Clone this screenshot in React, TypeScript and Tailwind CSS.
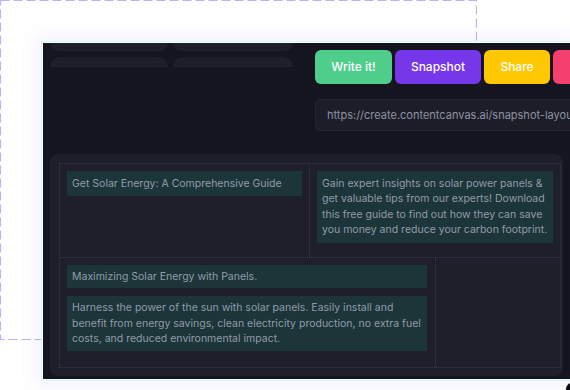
import React from 'react';

const font = { fontFamily: 'Inter, "Liberation Sans", sans-serif' };

const buttons = [
  { label: 'Write it!', cls: 'w-[77px] bg-[#4fcd8a]' },
  { label: 'Snapshot', cls: 'w-[86px] bg-[#7537e9]' },
  { label: 'Share', cls: 'w-[66px] bg-[#ffc800]' },
  { label: 'Publish', cls: 'w-[120px] bg-[#f43f6f]' },
];

const Box: React.FC<{ className?: string; children: React.ReactNode }> = ({ className = '', children }) => (
  <div className={`bg-[#1c3538] px-[5px] text-[10.5px] leading-[15.4px] text-[#929caa] ${className}`}>{children}</div>
);

const App: React.FC = () => {
  return (
    <div className="relative w-[570px] h-[390px] bg-white overflow-hidden" style={font}>
      <div className="relative w-[477px] h-[340px]">
        <svg className="w-full h-full" viewBox="0 0 477 340">
          <rect x="0.5" y="0.5" width="476" height="339" fill="none" stroke="#b8b4fc" strokeWidth="1.2" strokeDasharray="9 4" />
        </svg>

        <div className="absolute left-[43px] top-[43px] w-[527px] h-[336px] bg-[#15151f] overflow-hidden flex flex-col shadow-[0_0_0_1px_#ffffff,0_0_0_2px_#d3fbf6,0_0_16px_8px_rgba(167,139,250,0.10)]">
          <div className="flex h-[111px] shrink-0">
            <div className="w-[272px] shrink-0 pl-[7px] flex flex-col gap-[6px]">
              <div className="flex gap-[5px]">
                <div className="w-[118px] h-[8px] rounded-b-[10px] bg-[#1f1f2b]" />
                <div className="w-[120px] h-[8px] rounded-b-[10px] bg-[#1f1f2b]" />
              </div>
              <div className="flex gap-[5px]">
                <div className="w-[118px] h-[10px] rounded-t-[10px] bg-[#1f1f2b]" />
                <div className="w-[120px] h-[10px] rounded-t-[10px] bg-[#1f1f2b]" />
              </div>
            </div>
            <div className="pt-[7px] flex flex-col shrink-0">
              <div className="flex gap-[3px]">
                {buttons.map((b) => (
                  <div
                    key={b.label}
                    className={`${b.cls} h-[34px] shrink-0 rounded-[6px] flex items-center justify-center text-white text-[12px] font-medium`}
                  >
                    {b.label}
                  </div>
                ))}
              </div>
              <div className="mt-[15px] w-[320px] h-[32px] rounded-[5px] border border-[#262633] bg-[#1d1d28] pl-[11px] flex items-center text-[11px] text-[#8e94a2] whitespace-nowrap overflow-hidden">
                https://create.contentcanvas.ai/snapshot-layout/solar-energy-guide
              </div>
            </div>
          </div>

          <div className="ml-[7px] w-[513px] h-[222px] rounded-[8px] bg-[#1f1f2b] p-[9px]">
            <div className="w-[502px] h-[205px] border border-dotted border-[#3a3a4c] flex flex-col">
              <div className="flex h-[94px] border-b border-dotted border-[#3a3a4c]">
                <div className="w-[250px] border-r border-dotted border-[#3a3a4c] p-[7px]">
                  <Box className="w-[235px] py-[5px]">Get Solar Energy: A Comprehensive Guide</Box>
                </div>
                <div className="flex-1 p-[7px]">
                  <Box className="w-[236px] py-[5px]">
                    Gain expert insights on solar power panels &amp; get valuable tips from our experts! Download this free guide to find out how they can save you money and reduce your carbon footprint.
                  </Box>
                </div>
              </div>
              <div className="flex flex-1">
                <div className="w-[376px] border-r border-dotted border-[#3a3a4c] p-[7px] flex flex-col gap-[8px]">
                  <Box className="w-[360px] py-[4px]">Maximizing Solar Energy with Panels.</Box>
                  <Box className="w-[360px] py-[4px]">
                    Harness the power of the sun with solar panels. Easily install and benefit from energy savings, clean electricity production, no extra fuel costs, and reduced environmental impact.
                  </Box>
                </div>
                <div className="flex-1" />
              </div>
            </div>
          </div>
        </div>
      </div>

      <div className="absolute left-[566px] top-[383px] w-[12px] h-[12px] rounded-tl-[6px] bg-[#0b0b10]" />
    </div>
  );
};

export default App;
